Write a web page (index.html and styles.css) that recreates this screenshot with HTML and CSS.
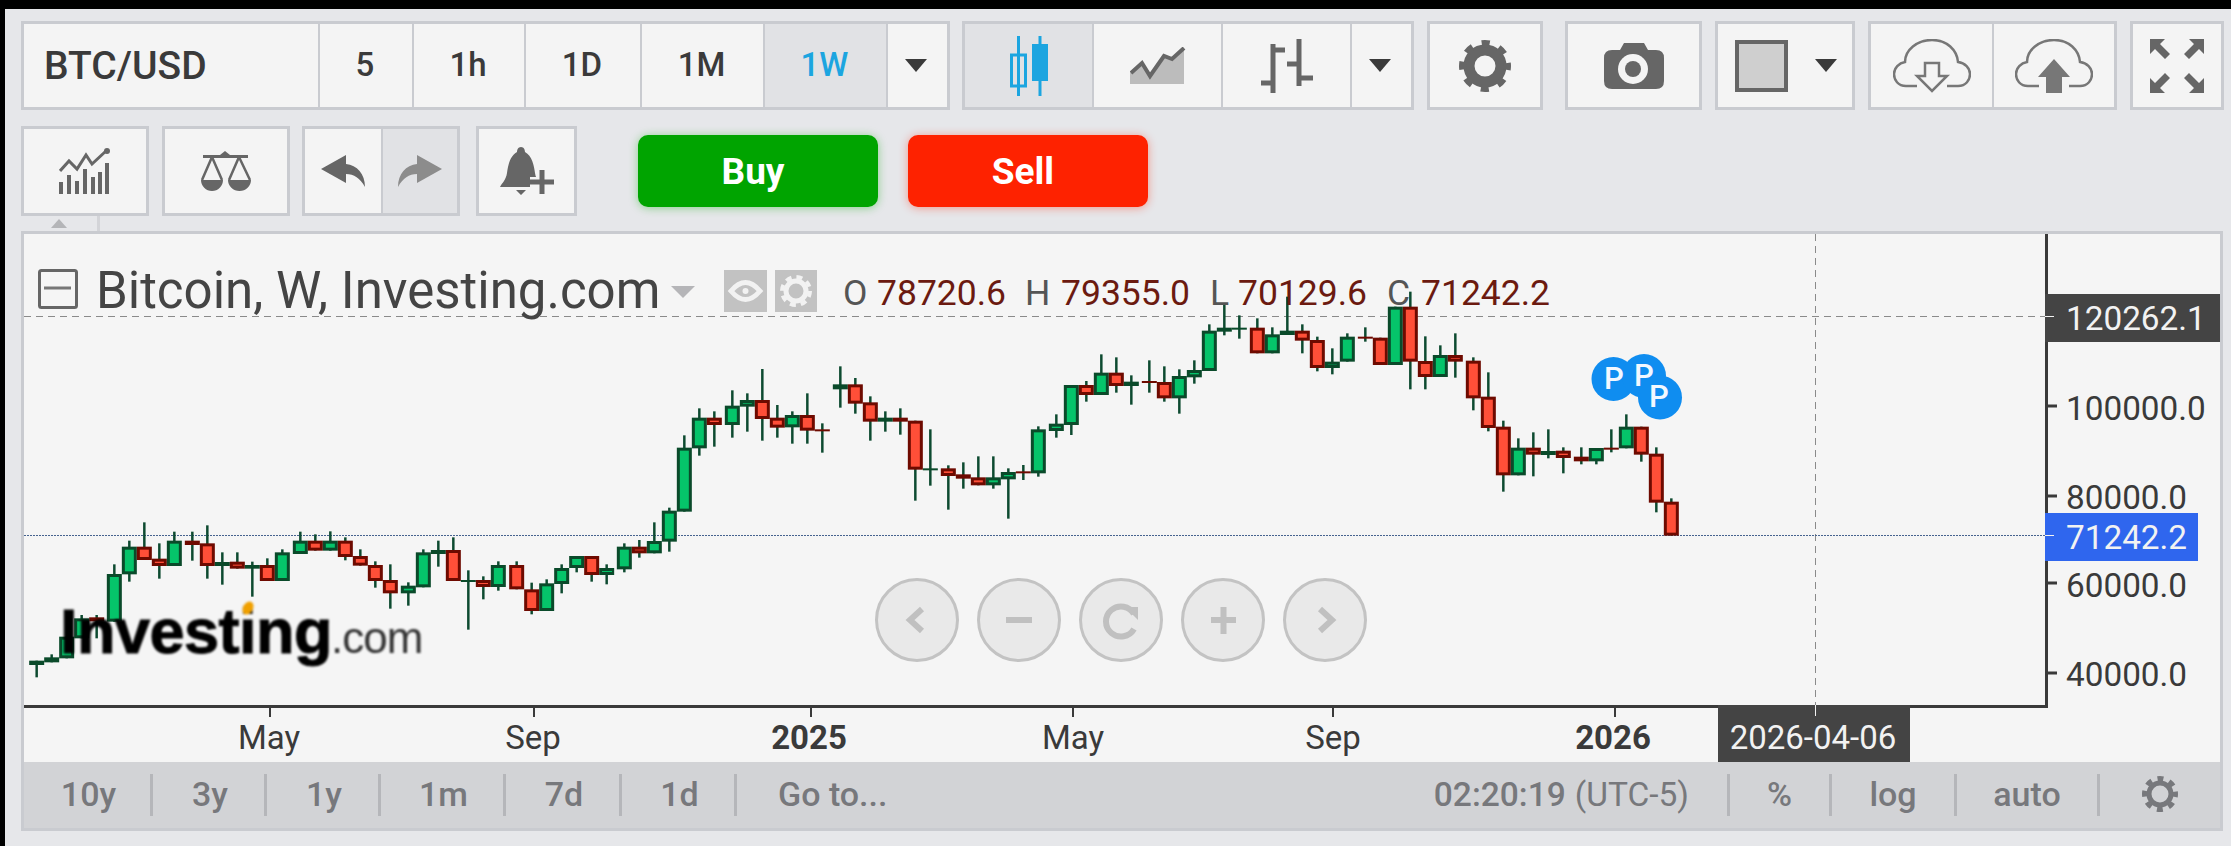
FILE: index.html
```html
<!DOCTYPE html>
<html lang="en">
<head>
<meta charset="utf-8">
<title>BTC/USD chart</title>
<link rel="stylesheet" href="styles.css">
</head>
<body>
<main class="page">
  <div class="toolbar">
    <div class="group g-time">
      <div class="cell symbol">BTC/USD</div>
      <div class="cell tf">5</div>
      <div class="cell tf">1h</div>
      <div class="cell tf">1D</div>
      <div class="cell tf">1M</div>
      <div class="cell tf on blue">1W</div>
      <div class="cell"><span class="caret"></span></div>
    </div>
    <div class="group g-type">
      <div class="cell on">
        <svg class="i-candle" viewBox="0 0 38 60"><path class="blue-s" d="M8.500 0V60M30 0V60"/><rect class="blue-s" x="1.500" y="19" width="14" height="31" fill="none"/><rect class="blue-f" x="22" y="8" width="16" height="37"/></svg>
      </div>
      <div class="cell">
        <svg class="i-area" viewBox="0 0 56 38"><path class="lightfill" d="M0 26L12 16L20 29L34 9L42 12L54 1V37H0Z"/><path class="zig" d="M1 26L12 16L20 29L34 9L42 12L54 1"/></svg>
      </div>
      <div class="cell">
        <svg class="i-bars" viewBox="0 0 52 54"><path class="thick" d="M12 5V54M0 44H12M12 11H24M38 0V47M26 25H38M38 39H52"/></svg>
      </div>
      <div class="cell"><span class="caret"></span></div>
    </div>
    <div class="group g-gear">
      <div class="cell">
        <svg class="i-gear" viewBox="0 0 52 52"><circle class="gear-ring" cx="26" cy="26" r="16"/><circle class="gear-teeth" cx="26" cy="26" r="22.500"/></svg>
      </div>
    </div>
    <div class="group g-cam">
      <div class="cell">
        <svg class="i-cam" viewBox="0 0 60 46"><path class="dark" d="M16 7L20 0H40L44 7H52Q60 7 60 15V38Q60 46 52 46H8Q0 46 0 38V15Q0 7 8 7Z"/><circle class="white" cx="29" cy="26" r="15"/><circle class="dark" cx="29" cy="26" r="8"/></svg>
      </div>
    </div>
    <div class="group g-color">
      <div class="cell color-cell">
        <span class="swatch"></span><span class="caret"></span>
      </div>
    </div>
    <div class="group g-cloud">
      <div class="cell">
        <svg class="i-cloud" viewBox="0 0 78 54"><path class="outline" d="M24 47H13C5 47 1 41 1 35C1 29 6 24 12 23C12 11 24 1 39 1C54 1 64 11 65 23C72 24 77 29 77 35C77 41 73 47 65 47H54"/><path class="outline" d="M32 24H46V37H54L39 52L24 37H32Z"/></svg>
      </div>
      <div class="cell">
        <svg class="i-cloud" viewBox="0 0 78 54"><path class="outline" d="M24 47H13C5 47 1 41 1 35C1 29 6 24 12 23C12 11 24 1 39 1C54 1 64 11 65 23C72 24 77 29 77 35C77 41 73 47 65 47H54"/><path class="midfill" d="M39 20L55 38H47V54H31V38H23Z"/></svg>
      </div>
    </div>
    <div class="group g-full">
      <div class="cell">
        <svg class="i-full" viewBox="0 0 54 54"><path class="dark" d="M0 0H15L10 5L20 15L15 20L5 10L0 15Z"/><path class="dark" d="M54 0H39L44 5L34 15L39 20L49 10L54 15Z"/><path class="dark" d="M0 54H15L10 49L20 39L15 34L5 44L0 39Z"/><path class="dark" d="M54 54H39L44 49L34 39L39 34L49 44L54 39Z"/></svg>
      </div>
    </div>
  </div>

  <div class="toolbar second">
    <div class="group g-square">
      <div class="cell">
        <svg class="i-ind" viewBox="0 0 52 46"><path class="bars" d="M2 34V46M10 27V46M18 33V46M26 21V46M34 29V46M41 24V46M48 15V46"/><path class="zig thin" d="M1 23L10 13L18 21L27 7L33 16L47 3"/><circle class="dark" cx="48" cy="3" r="3"/></svg>
      </div>
    </div>
    <div class="group g-square">
      <div class="cell">
        <svg class="i-scale" viewBox="0 0 52 40"><path class="dark" d="M25 0L30 4H48V7H3V4H20Z"/><path class="wire" d="M12 6L2 29M12 6L22 29M39 6L29 29M39 6L50 29"/><path class="dark" d="M1 29H23A11 11 0 0 1 1 29ZM28 29H51A11.500 11 0 0 1 28 29Z"/></svg>
      </div>
    </div>
    <div class="group g-undo">
      <div class="cell">
        <svg class="i-undo" viewBox="0 0 44 32"><path class="dark" d="M0 14L25 0V9C36 10 44 19 44 32C39 23 33 19 25 19V28Z"/></svg>
      </div>
      <div class="cell on">
        <svg class="i-undo" viewBox="0 0 44 32"><path class="soft" d="M44 14L19 0V9C8 10 0 19 0 32C5 23 11 19 19 19V28Z"/></svg>
      </div>
    </div>
    <div class="group g-bell">
      <div class="cell">
        <svg class="i-bell" viewBox="0 0 54 48"><path class="dark" d="M21 0C24 0 25 3 25 5C32 9 34 18 35 26C36 33 40 36 42 40H0C2 36 6 33 7 26C8 18 10 9 17 5C17 3 18 0 21 0ZM16 43H26L21 48Z"/><path class="plus-halo" d="M42 23V47M30 35H54"/><path class="plus" d="M42 23V47M30 35H54"/></svg>
      </div>
    </div>
    <button class="trade buy">Buy</button>
    <button class="trade sell">Sell</button>
  </div>

  <div class="tab"><span class="tab-arrow"></span></div>

  <section class="panel">
    <svg class="chart" viewBox="24 234 2196 528">
      <path class="dash" d="M24 316.500H2045"/>
      <path class="dash" d="M1815.500 234V706"/>
      <path class="dotted" d="M24 535.500H2045"/>

      <g id="candles"></g>

      <g class="pins">
        <circle cx="1613.500" cy="379" r="22"/><circle cx="1644" cy="376" r="22"/><circle cx="1660" cy="397.500" r="22"/>
        <text x="1614" y="389">P</text><text x="1644" y="386">P</text><text x="1659" y="407">P</text>
      </g>

      <g class="logo">
        <text class="logo-main" x="60" y="653">Investing</text>
        <text class="logo-com" x="331" y="653">.com</text>
        <ellipse class="logo-dot" cx="248" cy="608" rx="5" ry="7" transform="rotate(30 248 608)"/>
      </g>

      <g class="legend">
        <rect class="box" x="39.500" y="270.500" width="37" height="37" rx="2"/>
        <path class="box-dash" d="M44 288H71"/>
        <text class="title" x="96" y="308">Bitcoin, W, Investing.com</text>
        <path class="legend-caret" d="M671 286H695L683 298Z"/>
        <rect class="chip" x="724" y="270" width="43" height="42"/>
        <path class="chip-ring" d="M731 291Q745.500 274 760 291Q745.500 308 731 291Z"/>
        <circle class="chip-dot" cx="745.500" cy="291" r="3"/>
        <rect class="chip" x="775" y="270" width="42" height="42"/>
        <circle class="chip-ring" cx="796" cy="291" r="10"/>
        <circle class="chip-teeth" cx="796" cy="291" r="14"/>
        <text class="ohlc-k" x="843" y="305">O</text><text class="ohlc-v" x="877" y="305">78720.6</text>
        <text class="ohlc-k" x="1025" y="305">H</text><text class="ohlc-v" x="1061" y="305">79355.0</text>
        <text class="ohlc-k" x="1210" y="305">L</text><text class="ohlc-v" x="1238" y="305">70129.6</text>
        <text class="ohlc-k" x="1387" y="305">C</text><text class="ohlc-v" x="1421" y="305">71242.2</text>
      </g>

      <g class="nav">
        <circle cx="917" cy="620" r="40.500"/><circle cx="1019" cy="620" r="40.500"/><circle cx="1121" cy="620" r="40.500"/><circle cx="1223" cy="620" r="40.500"/><circle cx="1325" cy="620" r="40.500"/>
        <path class="nav-s" d="M922 609L910 620L922 631M1006 620H1032M1211 620H1236M1223.500 607V634M1320 609L1332 620L1320 631"/>
        <path class="nav-t" d="M1134 614A15 15 0 1 0 1134 629"/>
        <path class="nav-f" d="M1125 607H1138V620Z"/>
      </g>

      <path class="axis" d="M24 706.500H2046.500V234"/>
      <path class="tick" d="M2048 406H2057M2048 496H2057M2048 583H2057M2048 673H2057"/>
      <path class="tick thin" d="M270 708V717M534 708V717M811 708V717M1073 708V717M1333 708V717M1615 708V717"/>

      <text class="ax-x" x="269" y="749">May</text>
      <text class="ax-x" x="533" y="749">Sep</text>
      <text class="ax-x bold" x="809" y="749">2025</text>
      <text class="ax-x" x="1073" y="749">May</text>
      <text class="ax-x" x="1333" y="749">Sep</text>
      <text class="ax-x bold" x="1613" y="749">2026</text>

      <text class="ax-y" x="2066" y="420">100000.0</text>
      <text class="ax-y" x="2066" y="509">80000.0</text>
      <text class="ax-y" x="2066" y="597">60000.0</text>
      <text class="ax-y" x="2066" y="686">40000.0</text>

      <rect class="tag-dark" x="2045" y="294" width="175" height="48"/>
      <path class="tag-tick" d="M2045 316.500H2054"/>
      <text class="ax-y light" x="2066" y="330">120262.1</text>

      <rect class="tag-blue" x="2045" y="513" width="153" height="48"/>
      <path class="tag-tick" d="M2045 535.500H2054"/>
      <text class="ax-y light" x="2066" y="549">71242.2</text>

      <rect class="tag-dark" x="1718" y="705" width="192" height="57"/>
      <path class="tag-tick" d="M1815.500 705V716"/>
      <text class="ax-x light" x="1813" y="749">2026-04-06</text>
    </svg>

    <div class="bar">
      <div class="ranges">
        <span class="rg">10y</span><span class="rg">3y</span><span class="rg">1y</span><span class="rg">1m</span><span class="rg">7d</span><span class="rg">1d</span>
        <span class="goto">Go to...</span>
      </div>
      <div class="opts">
        <span class="clock"><b>02:20:19</b> (UTC-5)</span>
        <span class="opt">%</span><span class="opt">log</span><span class="opt">auto</span>
        <span class="opt">
          <svg class="i-gear-s" viewBox="0 0 36 36"><circle class="gs-ring" cx="18" cy="18" r="11"/><circle class="gs-teeth" cx="18" cy="18" r="15.500"/></svg>
        </span>
      </div>
    </div>
  </section>
</main>
<script src="chart.js"></script>
</body>
</html>
```
FILE: styles.css
```css
* { box-sizing: border-box; }
html, body { margin: 0; height: 100%; background: #000; overflow: hidden; }
body { padding: 9px 0 0 5px; font-family: Roboto, "Liberation Sans", sans-serif; }
.page { background: #e6e7ea; height: 837px; padding: 12px 0 0 16px; }

.toolbar { display: flex; gap: 13px; height: 89px; }
.toolbar.second { height: 90px; margin-top: 16px; }
.group { display: grid; border: 3px solid #c9cbd0; background: #f4f4f4; }
.cell { display: flex; align-items: center; justify-content: center; border-left: 2px solid #c9cbd0; color: #3a3a3a; font-size: 33px; font-weight: 500; }
.cell:first-child { border-left: 0; }
.cell.on { background: #e1e2e5; }
.blue { color: #1ca5e0; }
.tf { padding: 0 2px 3px 0; }

.g-time { width: 929px; grid-template-columns: 294px 94px 112px 116px 123px 123px 61px; }
.g-type { width: 452px; margin-left: -1px; grid-template-columns: 127px 129px 129px 61px; }
.g-gear { width: 116px; }
.g-cam { width: 137px; margin-left: 9px; }
.g-color { width: 140px; }
.g-cloud { width: 249px; grid-template-columns: 121px 122px; }
.g-full { width: 94px; }
.g-square { width: 128px; }
.g-undo { width: 158px; margin-left: -1px; grid-template-columns: 76px 76px; }
.g-bell { width: 101px; margin-left: 3px; }

.symbol { justify-content: flex-start; padding-left: 20px; font-size: 39px; }
.caret { width: 0; height: 0; margin-right: 3px; border-left: 11px solid transparent; border-right: 11px solid transparent; border-top: 13px solid #3a3a3a; }
.color-cell { gap: 27px; padding-left: 2px; }
.color-cell .caret { margin-right: 0; }
.swatch { width: 53px; height: 52px; background: #cfcfcf; border: 4px solid #666; }

.i-candle { width: 38px; height: 60px; }
.i-area { width: 56px; height: 38px; }
.i-bars { width: 52px; height: 54px; }
.i-gear { width: 52px; height: 52px; }
.i-cam { width: 60px; height: 46px; }
.i-cloud { width: 78px; height: 54px; }
.i-full { width: 54px; height: 54px; }
.i-ind { width: 52px; height: 46px; }
.i-scale { width: 52px; height: 40px; }
.i-undo { width: 44px; height: 32px; }
.i-bell { width: 54px; height: 48px; }
.i-gear-s { width: 36px; height: 36px; }

.blue-s { stroke: #1ca5e0; stroke-width: 3; }
.blue-f { fill: #1ca5e0; }
.lightfill { fill: #bcbcbc; }
.zig { fill: none; stroke: #666; stroke-width: 4; }
.zig.thin { stroke-width: 3; }
.thick { fill: none; stroke: #666; stroke-width: 5; }
.dark { fill: #666; }
.white { fill: #f4f4f4; }
.soft { fill: #8c8c8c; }
.midfill { fill: #777; }
.outline { fill: none; stroke: #777; stroke-width: 2.500; }
.bars { fill: none; stroke: #666; stroke-width: 4; }
.wire { fill: none; stroke: #666; stroke-width: 2.500; }
.gear-ring { fill: none; stroke: #666; stroke-width: 11; }
.gear-teeth { fill: none; stroke: #666; stroke-width: 7; stroke-dasharray: 8 9.670; stroke-dashoffset: 4; }
.plus-halo { fill: none; stroke: #f4f4f4; stroke-width: 10; }
.plus { fill: none; stroke: #666; stroke-width: 5; }

.trade { width: 240px; height: 72px; margin-top: 9px; padding: 0 10px 0 0; border: 0; border-radius: 10px; color: #fff; font: 700 37px Roboto, "Liberation Sans", sans-serif; }
.buy { margin-left: 48px; background: #00a400; box-shadow: 0 1px 10px rgba(0, 170, 0, .4); }
.sell { margin-left: 17px; background: #fe2200; box-shadow: 0 1px 10px rgba(254, 34, 0, .4); }

.tab { display: flex; align-items: center; justify-content: center; width: 79px; height: 15px; border-right: 3px solid #d3d4d8; }
.tab-arrow { width: 0; height: 0; border-left: 8px solid transparent; border-right: 8px solid transparent; border-bottom: 9px solid #b4b5b8; }

.panel { width: 2202px; height: 600px; border: 3px solid #c9cbd0; background: #f5f5f5; }
.chart { display: block; width: 2196px; height: 528px; }

.dash { fill: none; stroke: #8a8a8a; stroke-width: 1; stroke-dasharray: 7 5; }
.dotted { fill: none; stroke: #46638f; stroke-width: 1; stroke-dasharray: 2 1; }
.axis { fill: none; stroke: #3a3a3a; stroke-width: 3; }
.tick { fill: none; stroke: #3a3a3a; stroke-width: 3; }
.tick.thin { stroke-width: 2; }

.wick { stroke: #0d4a30; stroke-width: 2.500; }
.up { fill: #05c46a; stroke: #0a4a2a; stroke-width: 3; }
.down { fill: #ff4f38; stroke: #6e0a00; stroke-width: 3; }
.flat-up { fill: #0a4a2a; }
.flat-down { fill: #6e0a00; }

.pins circle { fill: #0f8df0; }
.pins text { fill: #f2f8ff; font-size: 31px; font-weight: 500; text-anchor: middle; }

.logo { filter: blur(1.200px); }
.logo-main { font: 700 63px "Liberation Sans", sans-serif; letter-spacing: -0.500px; fill: #000; stroke: #000; stroke-width: 1px; }
.logo-com { font: 400 44px "Liberation Sans", sans-serif; letter-spacing: -1px; fill: #333; }
.logo-dot { fill: #f0a000; }

.box { fill: none; stroke: #666; stroke-width: 3; }
.box-dash { fill: none; stroke: #777; stroke-width: 3; }
.title { fill: #444; font-size: 51px; font-weight: 400; }
.legend-caret { fill: #b5b5b8; }
.chip { fill: #c2c2c2; }
.chip-ring { fill: none; stroke: #f2f2f2; stroke-width: 5; }
.chip-dot { fill: #f2f2f2; }
.chip-teeth { fill: none; stroke: #f2f2f2; stroke-width: 4; stroke-dasharray: 6 5; }
.ohlc-k { fill: #555; font-size: 35.500px; }
.ohlc-v { fill: #6b1a10; font-size: 35.500px; }

.nav circle { fill: #e9e9e9; stroke: #c3c3c3; stroke-width: 3; }
.nav-s { fill: none; stroke: #c0c0c0; stroke-width: 6; }
.nav-t { fill: none; stroke: #c0c0c0; stroke-width: 6; }
.nav-f { fill: #c0c0c0; }

.ax-x { fill: #3a3a3a; font-size: 33px; text-anchor: middle; }
.ax-x.bold { font-weight: 700; }
.ax-y { fill: #3a3a3a; font-size: 33.300px; }
.ax-y.light, .ax-x.light { fill: #f2f2f2; }
.tag-dark { fill: #444; }
.tag-blue { fill: #2f66ee; }
.tag-tick { fill: none; stroke: #f2f2f2; stroke-width: 1; }

.bar { display: flex; justify-content: space-between; height: 66px; padding: 12px 0; background: #d2d3d6; color: #77787c; font-size: 34px; font-weight: 500; }
.ranges { display: grid; grid-template-columns: 129px 114px 114px 125px 116px 115px auto; align-items: stretch; }
.rg { display: flex; align-items: center; justify-content: center; padding: 0 0 2px 3px; border-right: 3px solid #b5b6ba; }
.goto { display: flex; align-items: center; padding: 0 0 2px 41px; }
.opts { display: grid; grid-template-columns: auto 102px 125px 143px 123px; align-items: stretch; }
.clock { display: flex; align-items: center; gap: 9px; padding: 0 38px 2px 0; font-size: 33.500px; font-weight: 400; }
.clock b { font-weight: 500; }
.opt { display: flex; align-items: center; justify-content: center; padding-bottom: 2px; border-left: 3px solid #b5b6ba; }
.gs-ring { fill: none; stroke: #77787c; stroke-width: 5; }
.gs-teeth { fill: none; stroke: #77787c; stroke-width: 5; stroke-dasharray: 6 6.170; stroke-dashoffset: 3; }
```
FILE: chart.js
```js
// Weekly candles: [x, wickTop, bodyTop, bodyBottom, wickLow, direction], grouped in source tiles.
var tiles = [
  { x0: 20, y0: 500, rows: [
    [50,0,482,495,532,'u'],[95,463,472,487,0,'u'],[140,0,410,475,0,'u'],[185,345,355,415,0,'u'],[230,345,352,364,415,'d'],
    [283,193,222,365,0,'u'],[328,122,140,223,245,'u'],[373,67,140,180,0,'d'],[418,130,176,198,236,'d'],[463,95,122,198,0,'u'],
    [517,95,122,135,182,'d'],[562,76,130,198,236,'d'],[607,157,186,198,254,'u'],[652,157,185,206,0,'d'],[697,185,195,206,290,'u'],
    [742,175,195,243,0,'d'],[787,148,157,243,0,'u'],[841,95,122,162,0,'u'],[886,103,122,152,0,'d'],[931,94,122,152,0,'u'],
    [976,112,122,171,181,'d'],[1021,148,168,197,0,'d'],[1066,184,195,243,263,'d'],[1111,193,240,280,326,'d'],[1165,247,257,280,317,'u'],
    [1210,148,157,262,0,'u'],[1255,122,150,162,200,'u'],[1300,112,150,243,0,'d'],[1345,211,240,243,389,'u'],[1390,229,240,261,298,'d'],
    [1435,184,195,261,272,'u']
  ]},
  { x0: 500, y0: 340, rows: [
    [50,664,675,748,0,'d'],[95,728,748,813,823,'d'],[140,718,730,813,0,'u'],[185,673,684,732,760,'u'],[230,0,648,684,697,'u'],
    [275,0,648,705,725,'d'],[320,673,684,705,733,'u'],[373,610,620,688,697,'u'],[418,600,620,640,653,'d'],[463,547,603,640,0,'u'],
    [508,503,512,605,635,'u'],[553,286,323,515,0,'u'],[598,205,233,325,347,'u'],[643,214,233,255,320,'d'],[697,151,197,255,293,'u'],
    [742,160,180,200,275,'u'],[787,87,180,237,302,'d'],[832,195,233,263,293,'d'],[877,214,225,262,311,'u'],[922,160,225,272,311,'d'],
    [967,250,268,274,338,'d'],[1021,79,133,148,203,'u'],[1066,114,133,191,221,'d'],[1111,169,187,245,302,'d'],[1156,214,233,245,275,'u'],
    [1201,205,233,245,284,'d'],[1246,0,242,389,482,'d'],[1291,268,385,390,437,'u'],[1345,376,385,408,509,'d'],[1390,367,403,416,446,'d'],
    [1435,349,412,436,0,'d'],[1480,349,412,436,446,'u']
  ]},
  { x0: 880, y0: 300, rows: [
    [385,505,516,538,656,'u'],[430,495,514,520,540,'d'],[475,379,388,520,530,'u'],[529,343,371,393,413,'u'],[574,0,255,375,405,'u'],
    [619,243,255,285,305,'d'],[664,163,218,285,0,'u'],[709,172,218,258,278,'d'],[754,226,245,258,314,'u'],[808,181,243,249,278,'d'],
    [853,199,246,295,305,'d'],[898,208,228,295,341,'u'],[943,181,210,232,251,'u'],[988,73,92,213,0,'u'],[1033,10,83,95,106,'u'],
    [1078,46,83,88,116,'u'],[1132,55,83,160,0,'d'],[1177,82,103,160,0,'u']
  ]},
  { x0: 1280, y0: 290, rows: [
    [22,20,122,135,0,'u'],[67,103,122,152,190,'d'],[112,140,150,234,244,'d'],[157,175,215,234,253,'u'],[202,130,140,215,0,'u'],
    [256,112,140,146,155,'d'],[301,0,143,225,0,'d'],[346,0,50,225,0,'u'],[391,5,50,215,298,'d'],[436,139,213,261,298,'d'],
    [481,166,195,261,0,'u'],[526,130,195,215,263,'d'],[580,202,212,325,361,'d'],[625,247,320,414,424,'d'],[670,392,410,556,605,'d'],
    [715,445,473,556,0,'u'],[760,427,473,494,559,'d'],[805,418,483,495,505,'u'],[850,472,482,504,550,'d'],[904,472,500,514,523,'d'],
    [949,0,474,514,523,'u'],[994,418,473,478,487,'d'],[1039,373,410,475,0,'u'],[1084,0,410,494,515,'d'],[1129,472,491,638,667,'d'],
    [1174,625,635,737,0,'d']
  ]}
];

var NS = 'http://www.w3.org/2000/svg';
var host = document.getElementById('candles');

function add(name, attrs, cls) {
  var el = document.createElementNS(NS, name);
  for (var k in attrs) el.setAttribute(k, attrs[k]);
  el.setAttribute('class', cls);
  host.appendChild(el);
}

tiles.forEach(function (tile) {
  tile.rows.forEach(function (r) {
    var x = tile.x0 + r[0] / 3;
    var bodyTop = tile.y0 + r[2] / 3;
    var bodyBot = tile.y0 + r[3] / 3;
    var wickTop = r[1] ? tile.y0 + r[1] / 3 : bodyTop;
    var wickLow = r[4] ? tile.y0 + r[4] / 3 : bodyBot;
    var dir = r[5] === 'u' ? 'up' : 'down';
    add('line', { x1: x, x2: x, y1: wickTop, y2: wickLow }, 'wick');
    if (bodyBot - bodyTop < 6) {
      add('rect', { x: x - 7.5, y: bodyTop, width: 15, height: Math.max(bodyBot - bodyTop, 2) }, 'flat-' + dir);
    } else {
      add('rect', { x: x - 6, y: bodyTop + 1.5, width: 12, height: bodyBot - bodyTop - 3 }, dir);
    }
  });
});
```
